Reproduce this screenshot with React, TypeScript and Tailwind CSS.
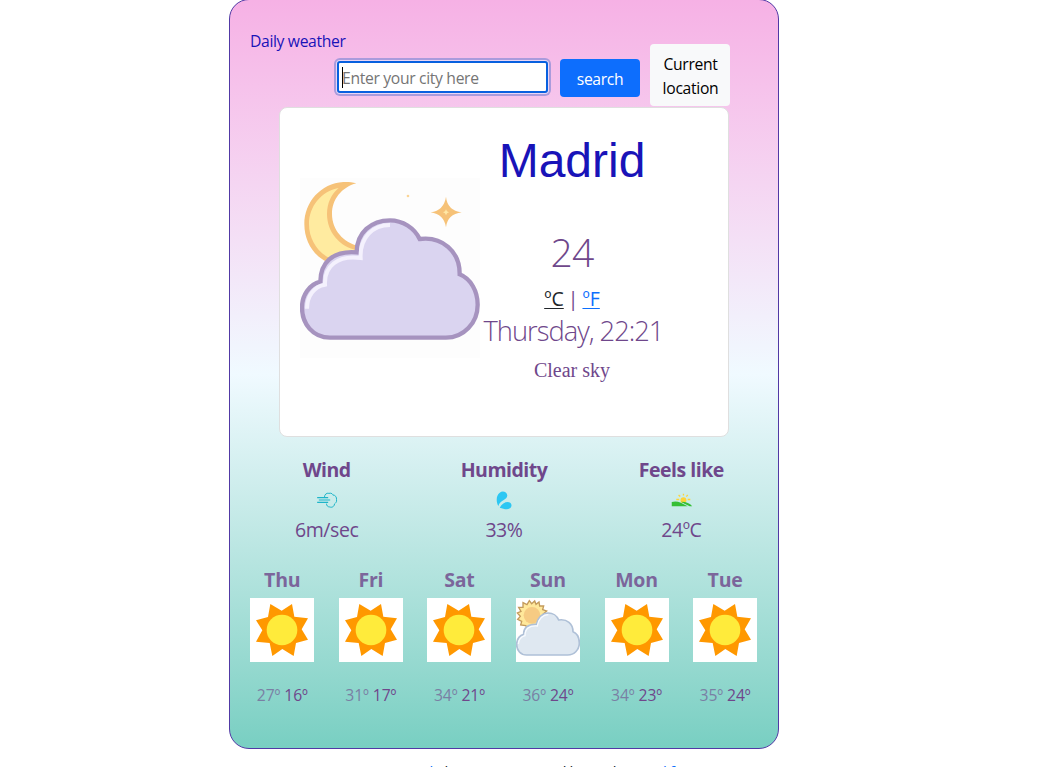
import React from "react";

const SunIcon = () => (
  <svg viewBox="75 114 192 192" className="block h-16 w-16 bg-white">
    <path
      fill="#ff9800"
      d="M136 132 170 152 201 132 208 170 249 175 230 208 249 239 213 249 206 288 172 267 142 288 134 249 93 245 112 211 93 181 129 171Z"
    />
    <circle cx="171" cy="210" r="46" fill="#ffeb3b" />
  </svg>
);

const CloudSunIcon = () => (
  <svg viewBox="48 114 192 192" className="block h-16 w-16 bg-white">
    <path
      fill="#ffe89b"
      stroke="#c39a5b"
      strokeWidth="4"
      d="M88 122 95 131 104 123 108 133 117 126 119 138 131 138 128 149 140 153 130 162 139 170 132 179 135 190 120 192 105 204 94 196 84 204 77 197 62 195 65 184 53 178 61 169 52 159 63 154 56 142 69 142 69 128 81 134Z"
    />
    <circle cx="96" cy="166" r="25" fill="#f6cb83" />
    <path
      fill="#dfe8f1"
      stroke="#afc0d7"
      strokeWidth="5"
      strokeLinejoin="round"
      d="M80 285C62 285 50 271 50 254C50 238 59 227 71 223C70 205 83 192 109 193C113 173 127 159 145 159C158 159 171 167 176 180C201 176 219 191 219 215C231 220 238 234 238 249C238 269 223 285 203 285Z"
    />
    <path
      fill="none"
      stroke="#f8fbff"
      strokeWidth="4"
      d="M55 252C56 239 64 230 75 227C75 207 87 196 112 198C115 178 128 164 145 164"
    />
  </svg>
);

const MoonCloudIcon = () => (
  <svg viewBox="30 24 540 540" className="block h-[180px] w-[180px] bg-[#fdfdfd]">
    <path
      fill="#f6c278"
      d="M199 40C185 36 172 35 160 36C92 40 43 97 43 162C43 214 70 256 112 277L130 300H205V228C160 217 126 180 126 132C126 88 155 52 199 40Z"
    />
    <path
      fill="#ffeba0"
      d="M146 54C93 64 57 110 57 162C57 206 80 244 118 264L202 250V241C148 230 111 186 111 132C111 99 124 72 146 54Z"
    />
    <path fill="#f6c278" d="M468 80Q472 121 515 127Q472 133 468 172Q462 133 422 127Q462 121 468 80Z" />
    <path fill="#f6c278" d="M468 101 480 119 494 127 480 135 468 152 457 135 443 127 457 119Z" />
    <path fill="#ffe8a6" d="M468 118 471 124 477 127 471 130 468 136 465 130 459 127 465 124Z" />
    <circle cx="354" cy="78" r="4" fill="#fbd596" />
    <path
      fill="#dad4f0"
      stroke="#a693bf"
      strokeWidth="13"
      d="M120 503C68 503 36 461 36 412C36 376 58 343 91 335C91 280 126 241 200 247C200 188 244 151 300 151C338 151 373 174 389 207C455 198 510 243 509 313C543 327 563 364 563 404C563 459 521 503 468 503Z"
    />
    <path
      fill="none"
      stroke="#f4f1fd"
      strokeWidth="12"
      d="M51 416C51 378 73 349 105 344C102 289 144 254 212 264C209 203 248 165 300 165"
    />
  </svg>
);

const WindIcon = () => (
  <svg
    viewBox="276 214 62 54"
    className="ml-[2px] block h-[18px] w-[21px]"
    fill="none"
    stroke="#1eb5c9"
    strokeWidth="3"
  >
    <path d="M298 232C298 225 304 219 311 221C320 219 323 224 323 226C331 226 335 233 334 240C336 247 330 251 328 253C327 262 319 264 314 262C307 262 304 257 304 252" />
    <path strokeWidth="3.5" d="M276 234H309M281 241H315M276 248H309" />
  </svg>
);

const DropsIcon = () => (
  <svg viewBox="48 31 48 58" className="block h-[19px] w-4" fill="#2cc7f3">
    <path d="M55 77C47 64 48 43 59 36C68 29 81 34 82 44C83 59 59 59 55 77Z" />
    <path d="M59 82C65 70 76 64 86 65C96 66 98 78 90 84C80 91 70 84 59 82Z" />
  </svg>
);

const LandscapeIcon = () => (
  <svg viewBox="512 220 65 43" className="ml-px block h-[14px] w-[22px]">
    <circle cx="549" cy="242" r="9" fill="#fdd43a" />
    <path
      d="M549 228V222M558 231 562 226M562 240H570M539 231 534 226M536 240H527"
      stroke="#fdd43a"
      strokeWidth="4"
    />
    <path
      fill="#35bf35"
      d="M513 248Q526 243 541 250L562 261H513ZM541 247Q564 246 576 261H568Q555 255 541 247Z"
    />
  </svg>
);

const metrics = [
  { label: "Wind", value: "6m/sec", icon: <WindIcon /> },
  { label: "Humidity", value: "33%", icon: <DropsIcon /> },
  { label: "Feels like", value: "24ºC", icon: <LandscapeIcon /> },
];

const forecast = [
  { day: "Thu", high: 27, low: 16, cloudy: false },
  { day: "Fri", high: 31, low: 17, cloudy: false },
  { day: "Sat", high: 34, low: 21, cloudy: false },
  { day: "Sun", high: 36, low: 24, cloudy: true },
  { day: "Mon", high: 34, low: 23, cloudy: false },
  { day: "Tue", high: 35, low: 24, cloudy: false },
];

export default function App() {
  return (
    <div className="h-[767px] overflow-hidden bg-white font-['Open_Sans','Noto_Sans',sans-serif] text-base text-[#6f478b]">
      <main className="-mt-px ml-[229px] flex h-[750px] w-[550px] flex-col rounded-[20px] border border-[#5139a5] bg-linear-to-b from-[#f6b1e5] via-[#f0faff] to-[#78cfc2]">
        <header className="flex h-[107px] shrink-0 pl-5">
          <div className="mt-[29px] h-6 w-[85px] whitespace-nowrap text-[15.7px] leading-6 tracking-[-0.35px] text-[#1913b8]">
            Daily weather
          </div>
          <form className="flex h-full items-start gap-[10px]">
            <div className="relative mt-[61px] ml-[2px] h-8 w-[211px]">
              <input
                type="text"
                placeholder="Enter your city here"
                className="block h-8 w-full rounded-[3px] border-2 border-[#0860df] bg-white pt-[2px] pl-[3px] text-[15.7px] tracking-[-0.33px] caret-transparent shadow-[0_0_0_1px_#e9d6f5,0_0_0_3px_#aa9bdc] outline-none placeholder:text-[#757575]"
              />
              <span className="absolute top-[6px] left-[5px] h-[21px] w-px bg-black" />
            </div>
            <button
              type="button"
              className="mt-[59px] ml-[2px] h-[38px] w-20 rounded bg-[#0d6efd] pt-1 text-[15.7px] tracking-[-0.35px] text-white"
            >
              search
            </button>
            <button
              type="button"
              className="mt-11 h-[62px] w-20 rounded bg-[#f8f9fa] pt-[2px] pl-px text-[15.7px] leading-6 tracking-[-0.3px] text-black"
            >
              Current location
            </button>
          </form>
        </header>

        <section className="ml-[49px] flex h-[330px] w-[450px] shrink-0 rounded-lg border border-[#dfdfdf] bg-white pl-5">
          <div className="mt-[70px]">
            <MoonCloudIcon />
          </div>
          <div className="flex w-[184px] flex-col items-center whitespace-nowrap">
            <h1 className="mt-6 font-['Liberation_Sans',sans-serif] text-[48px] leading-[58px] text-[#1913b8]">Madrid</h1>
            <div className="mt-8 text-[39px] leading-[60px] font-light tracking-[-0.8px]">24</div>
            <div className="mt-[2px] text-[19.5px] leading-[30px]">
              <span className="text-[#212529] underline decoration-1 underline-offset-2">ºC</span>
              <span className="mx-[4px]">|</span>
              <a className="text-[#0d6efd] underline decoration-1 underline-offset-2">ºF</a>
            </div>
            <div className="mr-[-3px] text-[27.3px] leading-[34px] font-light tracking-[-1px]">Thursday, 22:21</div>
            <div className="mt-[7px] font-['Liberation_Serif',serif] text-[20px] leading-[30px]">Clear sky</div>
          </div>
        </section>

        <section className="mx-2 mt-[17px] grid shrink-0 grid-cols-3 text-[19.5px] leading-[30px]">
          {metrics.map((metric) => (
            <div key={metric.label} className="flex flex-col items-center">
              <h2 className="pt-px font-bold tracking-[-0.5px]">{metric.label}</h2>
              <div className="flex h-[30px] items-center">{metric.icon}</div>
              <div className="tracking-[-0.4px]">{metric.value}</div>
            </div>
          ))}
        </section>

        <section className="ml-2 mt-5 grid w-[531.4px] shrink-0 grid-cols-6">
          {forecast.map((item) => (
            <div key={item.day} className="flex flex-col items-center">
              <h3 className="h-[33px] text-[19.5px] leading-[30px] font-bold tracking-[-0.2px] opacity-80">
                {item.day}
              </h3>
              {item.cloudy ? <CloudSunIcon /> : <SunIcon />}
              <div className="mt-[21px] text-[15.7px] leading-6 tracking-[-0.1px]">
                <span className="opacity-60">{item.high}º</span> <span>{item.low}º</span>
              </div>
            </div>
          ))}
        </section>
      </main>
      <footer className="mt-[10px] ml-[226px] w-[550px] text-center text-[15.2px] leading-6 tracking-[-0.4px] whitespace-nowrap text-[#212529]">
        <a className="text-[#0d6efd]">open-source code</a> by susana ros and hosted on{" "}
        <a className="text-[#0d6efd]">netlify</a>
      </footer>
    </div>
  );
}
